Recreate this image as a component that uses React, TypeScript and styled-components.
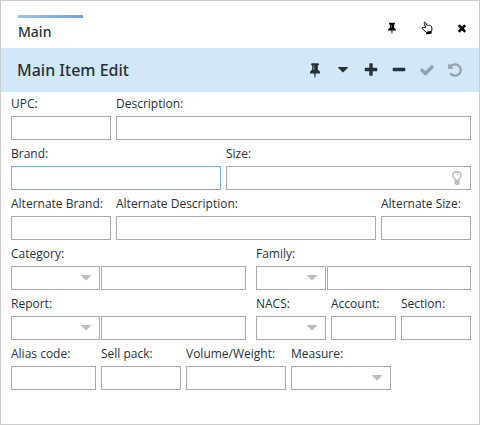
import React, { useId } from "react";
import styled, { createGlobalStyle } from "styled-components";

const GlobalStyle = createGlobalStyle`
  *, *::before, *::after { box-sizing: border-box; }
  body {
    margin: 0;
    background: #ffffff;
    color: #263238;
    font-family: "Open Sans", "Noto Sans", sans-serif;
    font-size: 12px;
  }
`;

const Panel = styled.main`
  display: flex;
  flex-direction: column;
  min-height: 100vh;
  border: 1px solid #cccccc;
`;

const TabBar = styled.header`
  display: flex;
  align-items: flex-end;
  justify-content: space-between;
  height: 47px;
  padding-left: 17px;
`;

const Tab = styled.button`
  width: 65px;
  height: 33px;
  padding: 1px 0 0;
  border: 0;
  background: linear-gradient(to right, #9fc5ec, #6ca2de) top / 100% 3px no-repeat;
  color: #263238;
  font: 500 14px/20px "Noto Sans", sans-serif;
  text-align: left;
`;

const Actions = styled.div`
  display: flex;
`;

const IconButton = styled.button<{ $width: number }>`
  display: flex;
  align-items: center;
  justify-content: center;
  width: ${(p) => p.$width}px;
  height: 40px;
  padding: 0;
  border: 0;
  background: none;
  color: ${(p) => (p.$width > 30 ? "#000000" : "#263238")};

  &:disabled {
    color: #94a2ad;
  }
`;

const TitleBar = styled.div`
  display: flex;
  align-items: center;
  justify-content: space-between;
  height: 44px;
  padding: 0 10px 0 16px;
  background: #d2e7f7;
`;

const Title = styled.h1`
  margin: 0;
  font: 500 16px/24px "Noto Sans", sans-serif;
`;

const Form = styled.form`
  display: flex;
  flex-direction: column;
  gap: 6px;
  padding: 4px 8px 12px 10px;
`;

const Row = styled.div<{ $columns: number[]; $gap?: number }>`
  display: grid;
  grid-template-columns: ${(p) => p.$columns.map((c) => `minmax(0, ${c}fr)`).join(" ")};
  gap: ${(p) => p.$gap ?? 5}px;
`;

const FieldBox = styled.div`
  display: flex;
  flex-direction: column;
  gap: 4px;
`;

const Label = styled.label`
  line-height: 16px;
  white-space: nowrap;
`;

const Control = styled.div`
  position: relative;
  display: flex;
`;

const TextInput = styled.input<{ $active?: boolean }>`
  width: 100%;
  height: 24px;
  padding: 0 5px;
  border: 1px solid ${(p) => (p.$active ? "#7aabe2" : "#aaaaaa")};
  border-radius: 0;
  background: #ffffff;
  color: inherit;
  font: inherit;
  outline: none;

  &:focus {
    border-color: #7aabe2;
  }
`;

const SelectInput = styled.select`
  appearance: none;
  width: 100%;
  height: 24px;
  padding: 0 22px 0 5px;
  border: 1px solid #aaaaaa;
  border-radius: 0;
  background: #ffffff;
  color: inherit;
  font: inherit;
`;

const Adornment = styled.span`
  position: absolute;
  top: 0;
  right: 9px;
  display: flex;
  align-items: center;
  height: 24px;
  color: #bdbdbd;
  pointer-events: none;
`;

const paths = {
  pin: "M800 864v-448q0-14-9-23t-23-9-23 9-9 23v448q0 14 9 23t23 9 23-9 9-23zm672 352q0 26-19 45t-45 19h-429l-51 483q-2 12-10.5 20.5t-20.5 8.5h-1q-27 0-32-27l-76-485h-404q-26 0-45-19t-19-45q0-123 78.5-221.5t177.5-98.5v-512q-52 0-90-38t-38-90 38-90 90-38h640q52 0 90 38t38 90-38 90-90 38v512q99 0 177.5 98.5t78.5 221.5z",
  plus: "M1600 736v192q0 40-28 68t-68 28h-416v416q0 40-28 68t-68 28h-192q-40 0-68-28t-28-68v-416h-416q-40 0-68-28t-28-68v-192q0-40 28-68t68-28h416v-416q0-40 28-68t68-28h192q40 0 68 28t28 68v416h416q40 0 68 28t28 68z",
  minus: "M1600 736v192q0 40-28 68t-68 28h-1216q-40 0-68-28t-28-68v-192q0-40 28-68t68-28h1216q40 0 68 28t28 68z",
  check: "M1671 566q0 40-28 68l-724 724-136 136q-28 28-68 28t-68-28l-136-136-362-362q-28-28-28-68t28-68l136-136q28-28 68-28t68 28l294 295 656-657q28-28 68-28t68 28l136 136q28 28 28 68z",
  undo: "M1664 896q0 156-61 298t-164 245-245 164-298 61q-172 0-327-72.5t-264-204.5q-7-10-6.5-22.5t8.5-20.5l137-138q10-9 25-9 16 2 23 12 73 95 179 147t225 52q104 0 198.5-40.5t163.5-109.5 109.5-163.5 40.5-198.5-40.5-198.5-109.5-163.5-163.5-109.5-198.5-40.5q-98 0-188 35.5t-160 101.5l137 138q31 30 14 69-17 40-59 40h-448q-26 0-45-19t-19-45v-448q0-42 40-59 39-17 69 14l130 129q107-101 244.5-156.5t284.5-55.5q156 0 298 61t245 164 164 245 61 298z",
  close: "M1490 1322q0 40-28 68l-136 136q-28 28-68 28t-68-28l-294-294-294 294q-28 28-68 28t-68-28l-136-136q-28-28-28-68t28-68l294-294-294-294q-28-28-28-68t28-68l136-136q28-28 68-28t68 28l294 294 294-294q28-28 68-28t68 28l136 136q28 28 28 68t-28 68l-294 294 294 294q28 28 28 68z",
};

function Glyph({ name, size }: { name: keyof typeof paths; size: number }) {
  return (
    <svg width={size} height={size} viewBox="0 0 1792 1792" fill="currentColor" aria-hidden="true">
      <path d={paths[name]} />
    </svg>
  );
}

function Caret() {
  return (
    <svg width="10" height="6" viewBox="0 0 10 6" fill="currentColor" aria-hidden="true">
      <path d="M0.6 0h8.800q.9.300.3 1L5.600 5.100q-.6.500-1.200 0L.3 1Q-.3.300.6 0z" />
    </svg>
  );
}

function Hand() {
  return (
    <svg width="12" height="14" viewBox="0 0 12 14" fill="none" stroke="currentColor" aria-hidden="true">
      <path
        d="M4.700 6.500 3.200 2.200c-.3-1 1-1.500 1.500-.6l1.400 2.900c.4-.7 1.300-.6 1.600 0 .5-.5 1.200-.3 1.500.4.600-.3 1.200 0 1.400.8l.4 2.500-.6 2.200-5.300.9L1.300 7.500c-.5-.8.2-1.500 1.100-1.200z"
        strokeWidth="1"
        strokeLinejoin="round"
      />
      <path d="M5.300 12.400 10.600 11.400" strokeWidth="2.200" />
    </svg>
  );
}

function Bulb() {
  return (
    <svg width="10" height="14" viewBox="0 0 10 14" fill="none" stroke="currentColor" aria-hidden="true">
      <path d="M3.400 9C3.200 7.400.8 6.700.8 4.300.8 2.200 2.600.7 5 .7s4.200 1.500 4.200 3.600C9.200 6.700 6.800 7.400 6.600 9" strokeWidth="1.400" />
      <path d="M5 2.900c1.200 0 2 .6 2 1.500" strokeWidth="1" />
      <path d="M2.500 8.500h5v4L6.200 14H3.800L2.500 12.500z" fill="currentColor" stroke="none" />
    </svg>
  );
}

interface FieldProps {
  label: string;
  active?: boolean;
  hint?: boolean;
}

function Field({ label, active, hint }: FieldProps) {
  const id = useId();
  return (
    <FieldBox>
      <Label htmlFor={id}>{label}:</Label>
      <Control>
        <TextInput id={id} type="text" $active={active} />
        {hint && (
          <Adornment>
            <Bulb />
          </Adornment>
        )}
      </Control>
    </FieldBox>
  );
}

function Dropdown({ id }: { id: string }) {
  return (
    <Control>
      <SelectInput id={id}>
        <option value="" />
      </SelectInput>
      <Adornment>
        <Caret />
      </Adornment>
    </Control>
  );
}

function SelectField({ label }: FieldProps) {
  const id = useId();
  return (
    <FieldBox>
      <Label htmlFor={id}>{label}:</Label>
      <Dropdown id={id} />
    </FieldBox>
  );
}

function LookupField({ label, columns }: FieldProps & { columns: number[] }) {
  const id = useId();
  return (
    <FieldBox>
      <Label htmlFor={id}>{label}:</Label>
      <Row $columns={columns} $gap={1}>
        <Dropdown id={id} />
        <TextInput type="text" aria-label={`${label} name`} />
      </Row>
    </FieldBox>
  );
}

export default function App() {
  return (
    <>
      <GlobalStyle />
      <Panel>
        <TabBar>
          <Tab type="button">Main</Tab>
          <Actions>
            <IconButton type="button" $width={35} aria-label="Pin tab"><Glyph name="pin" size={12} /></IconButton>
            <IconButton type="button" $width={35} aria-label="Select"><Hand /></IconButton>
            <IconButton type="button" $width={35} aria-label="Close"><Glyph name="close" size={12} /></IconButton>
          </Actions>
        </TabBar>
        <TitleBar>
          <Title>Main Item Edit</Title>
          <Actions>
            <IconButton type="button" $width={28} aria-label="Pin"><Glyph name="pin" size={16} /></IconButton>
            <IconButton type="button" $width={28} aria-label="More"><Caret /></IconButton>
            <IconButton type="button" $width={28} aria-label="Add"><Glyph name="plus" size={16} /></IconButton>
            <IconButton type="button" $width={28} aria-label="Remove"><Glyph name="minus" size={16} /></IconButton>
            <IconButton type="button" $width={28} aria-label="Save" disabled><Glyph name="check" size={16} /></IconButton>
            <IconButton type="button" $width={28} aria-label="Undo" disabled><Glyph name="undo" size={16} /></IconButton>
          </Actions>
        </TitleBar>
        <Form>
          <Row $columns={[100, 355]}>
            <Field label="UPC" />
            <Field label="Description" />
          </Row>
          <Row $columns={[210, 245]}>
            <Field label="Brand" active />
            <Field label="Size" hint />
          </Row>
          <Row $columns={[100, 260, 90]}>
            <Field label="Alternate Brand" />
            <Field label="Alternate Description" />
            <Field label="Alternate Size" />
          </Row>
          <Row $columns={[235, 215]} $gap={10}>
            <LookupField label="Category" columns={[89, 145]} />
            <LookupField label="Family" columns={[70, 144]} />
          </Row>
          <Row $columns={[235, 215]} $gap={10}>
            <LookupField label="Report" columns={[89, 145]} />
            <Row $columns={[70, 65, 70]}>
              <SelectField label="NACS" />
              <Field label="Account" />
              <Field label="Section" />
            </Row>
          </Row>
          <Row $columns={[85, 80, 100, 100, 75]}>
            <Field label="Alias code" />
            <Field label="Sell pack" />
            <Field label="Volume/Weight" />
            <SelectField label="Measure" />
          </Row>
        </Form>
      </Panel>
    </>
  );
}
